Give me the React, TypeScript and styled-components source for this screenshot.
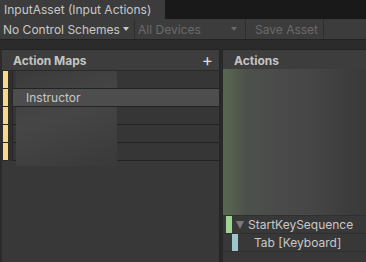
import styled, { createGlobalStyle } from 'styled-components';

const GlobalStyle = createGlobalStyle`
  *, *::before, *::after {
    box-sizing: border-box;
  }
  html, body {
    margin: 0;
    padding: 0;
    background: #282828;
    overflow: hidden;
  }
  body {
    font-family: Inter, "Noto Sans", "Liberation Sans", sans-serif;
    color: #c4c4c4;
  }
`;

type MapRow = {
  label?: string;
  selected?: boolean;
};

const mapRows: MapRow[] = [
  {},
  { label: 'Instructor', selected: true },
  {},
  {},
  {},
];

const App = () => (
  <>
    <GlobalStyle />
    <Window>
      <TabBar>
        <Tab>InputAsset (Input Actions)</Tab>
      </TabBar>
      <Toolbar>
        <Dropdown $width={135}>
          No Control Schemes
          <Caret />
        </Dropdown>
        <Dropdown $width={111} $disabled>
          All Devices
          <Caret $disabled />
        </Dropdown>
        <ToolButton>Save Asset</ToolButton>
      </Toolbar>
      <Panes>
        <MapsPane>
          <PaneHeader>
            <HeaderTitle>Action Maps</HeaderTitle>
            <AddButton>+</AddButton>
          </PaneHeader>
          <RowList>
            {mapRows.map((row, i) => (
              <Row key={i}>
                <Gutter>
                  <MapMarker />
                </Gutter>
                <RowBody $selected={row.selected}>
                  <RowLabel>{row.label}</RowLabel>
                </RowBody>
              </Row>
            ))}
            <BlurPatch />
          </RowList>
        </MapsPane>
        <ActionsPane>
          <PaneHeader>
            <HeaderTitle>Actions</HeaderTitle>
          </PaneHeader>
          <ActionsBlur />
          <ActionRow>
            <ActionMarker $color="#9fd393" />
            <Triangle />
            <RowLabel>StartKeySequence</RowLabel>
          </ActionRow>
          <ActionRow $indent>
            <ActionMarker $color="#9cc6cc" $gap={12} />
            <RowLabel>Tab [Keyboard]</RowLabel>
          </ActionRow>
        </ActionsPane>
      </Panes>
    </Window>
  </>
);

const Window = styled.div`
  width: 366px;
  height: 262px;
  display: flex;
  flex-direction: column;
  background: #282828;
  overflow: hidden;
`;

const TabBar = styled.div`
  height: 19px;
  display: flex;
  background: #191919;
`;

const Tab = styled.div`
  width: 165px;
  padding-left: 4px;
  background: #3c3c3c;
  font-size: 12px;
  line-height: 20px;
  color: #c8c8c8;
  white-space: nowrap;
`;

const Toolbar = styled.div`
  height: 21px;
  display: flex;
  align-items: stretch;
  background: #3c3c3c;
  border-bottom: 1px solid #232323;
`;

const Dropdown = styled.div<{ $width: number; $disabled?: boolean }>`
  width: ${(p) => p.$width}px;
  display: flex;
  align-items: center;
  justify-content: space-between;
  padding: 0 ${(p) => (p.$disabled ? 8 : 5)}px 0 3px;
  border-right: 1px solid #2e2e2e;
  font-size: 12px;
  color: ${(p) => (p.$disabled ? '#6a6a6a' : '#c8c8c8')};
  white-space: nowrap;
`;

const Caret = styled.span<{ $disabled?: boolean }>`
  width: 0;
  height: 0;
  border-left: 3.5px solid transparent;
  border-right: 3.5px solid transparent;
  border-top: 4px solid ${(p) => (p.$disabled ? '#6a6a6a' : '#c8c8c8')};
  margin-left: 3px;
`;

const ToolButton = styled.div`
  width: 78px;
  padding-left: 9px;
  display: flex;
  align-items: center;
  border-right: 1px solid #2e2e2e;
  font-size: 12px;
  color: #6a6a6a;
  white-space: nowrap;
`;

const Panes = styled.div`
  flex: 1;
  display: flex;
  gap: 1px;
  padding-top: 9px;
  background: #2b2b2b;
`;

const MapsPane = styled.div`
  width: 221px;
  display: flex;
  flex-direction: column;
  background: #383838;
  border-left: 2px solid #2b2b2b;
  border-right: 2px solid #262626;
`;

const ActionsPane = styled.div`
  flex: 1;
  display: flex;
  flex-direction: column;
  background: #383838;
  border-left: 1px solid #262626;
`;

const PaneHeader = styled.div`
  height: 22px;
  display: flex;
  align-items: center;
  justify-content: space-between;
  padding: 0 6px 0 11px;
  background: #3d3d3d;
  border-top: 1px solid #232323;
  border-bottom: 1px solid #2a2a2a;
`;

const HeaderTitle = styled.span`
  font-size: 12px;
  font-weight: 700;
  color: #c4c4c4;
`;

const AddButton = styled.span`
  font-size: 17px;
  line-height: 16px;
  color: #dedede;
`;

const RowList = styled.div`
  position: relative;
  display: flex;
  flex-direction: column;
`;

const Row = styled.div`
  height: 18px;
  display: flex;
  align-items: stretch;
`;

const Gutter = styled.div`
  width: 11px;
  display: flex;
  background: #2f2f2f;
  border-right: 1px solid #262626;
`;

const MapMarker = styled.span`
  width: 5px;
  margin-left: 1px;
  background: #f8d98a;
  border-bottom: 1px solid #2a2a2a;
`;

const RowBody = styled.div<{ $selected?: boolean }>`
  flex: 1;
  display: flex;
  align-items: center;
  padding-left: 13px;
  background: ${(p) => (p.$selected ? '#4d4d4d' : '#363636')};
  border-bottom: 1px solid #232323;
`;

const RowLabel = styled.span`
  font-size: 12px;
  color: #c8c8c8;
  white-space: nowrap;
`;

const BlurPatch = styled.div`
  position: absolute;
  left: 14px;
  top: 0;
  width: 101px;
  height: 95px;
  background: linear-gradient(160deg, #3b3b3b 0%, #464646 45%, #393939 100%);
  /* leave the Instructor row visible through the blur */
  mask: linear-gradient(
    to bottom,
    #000 0,
    #000 17px,
    transparent 17px,
    transparent 36px,
    #000 36px
  );
`;

const ActionsBlur = styled.div`
  height: 147px;
  margin-top: -2px;
  background: linear-gradient(
    90deg,
    #59684f 0%,
    #55604f 6%,
    #4d514b 16%,
    #4a4a4a 40%,
    #454545 65%,
    #3c3c3c 90%,
    #3a3a3a 100%
  );
  border-bottom: 1px solid #303030;
`;

const ActionRow = styled.div<{ $indent?: boolean }>`
  height: 18px;
  display: flex;
  align-items: center;
  padding-left: ${(p) => (p.$indent ? 9 : 3)}px;
  border-bottom: 1px solid #2f2f2f;
  gap: 4px;
`;

const ActionMarker = styled.span<{ $color: string; $gap?: number }>`
  width: 6px;
  height: 100%;
  background: ${(p) => p.$color};
  margin-right: ${(p) => p.$gap ?? 0}px;
`;

const Triangle = styled.span`
  width: 0;
  height: 0;
  border-left: 4.5px solid transparent;
  border-right: 4.5px solid transparent;
  border-top: 8px solid #7a7a7a;
`;

export default App;
